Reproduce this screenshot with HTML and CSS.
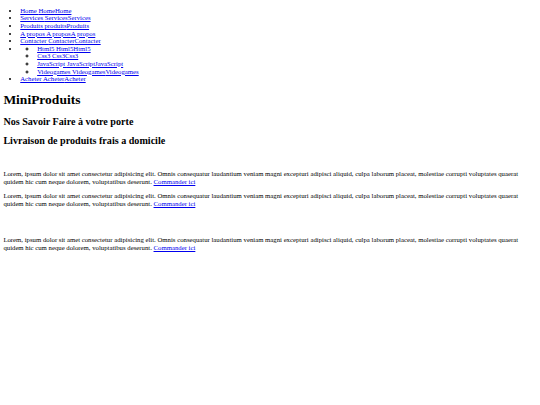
FILE: index.html
```html
<!DOCTYPE html>
<html lang="fr">
<head>
<meta charset="utf-8">
<title>MiniProduits</title>
<link rel="stylesheet" href="styles.css">
</head>
<body class="page">
<header class="header">
  <nav class="nav">
    <ul class="menu">
      <li class="menu-item"><a class="menu-link" href="#">Home <span>Home</span><span>Home</span></a></li>
      <li class="menu-item"><a class="menu-link" href="#">Services <span>Services</span><span>Services</span></a></li>
      <li class="menu-item"><a class="menu-link" href="#">Produits <span>produits</span><span>Produits</span></a></li>
      <li class="menu-item"><a class="menu-link" href="#">A propos <span>A propos</span><span>A propos</span></a></li>
      <li class="menu-item"><a class="menu-link" href="#">Contacter <span>Contacter</span><span>Contacter</span></a></li>
      <li class="menu-item">
        <ul class="submenu">
          <li class="menu-item"><a class="menu-link" href="#">Html5 <span>Html5</span><span>Html5</span></a></li>
          <li class="menu-item"><a class="menu-link" href="#">Css3 <span>Css3</span><span>Css3</span></a></li>
          <li class="menu-item"><a class="menu-link" href="#">JavaScript <span>JavaScript</span><span>JavaScript</span></a></li>
          <li class="menu-item"><a class="menu-link" href="#">Videogames <span>Videogames</span><span>Videogames</span></a></li>
        </ul>
      </li>
      <li class="menu-item"><a class="menu-link" href="#">Acheter <span>Acheter</span><span>Acheter</span></a></li>
    </ul>
  </nav>
  <h1 class="title">MiniProduits</h1>
  <h2 class="subtitle">Nos Savoir Faire à votre porte</h2>
  <h3 class="tagline">Livraison de produits frais a domicile</h3>
</header>
<main class="content">
  <div class="spacer spacer-top"></div>
  <p class="text">Lorem, ipsum dolor sit amet consectetur adipisicing elit. Omnis consequatur laudantium veniam magni excepturi adipisci aliquid, culpa laborum placeat, molestiae corrupti voluptates quaerat quidem hic cum neque dolorem, voluptatibus deserunt. <a class="cta" href="#">Commander ici</a></p>
  <p class="text">Lorem, ipsum dolor sit amet consectetur adipisicing elit. Omnis consequatur laudantium veniam magni excepturi adipisci aliquid, culpa laborum placeat, molestiae corrupti voluptates quaerat quidem hic cum neque dolorem, voluptatibus deserunt. <a class="cta" href="#">Commander ici</a></p>
  <div class="spacer spacer-mid"></div>
  <p class="text">Lorem, ipsum dolor sit amet consectetur adipisicing elit. Omnis consequatur laudantium veniam magni excepturi adipisci aliquid, culpa laborum placeat, molestiae corrupti voluptates quaerat quidem hic cum neque dolorem, voluptatibus deserunt. <a class="cta" href="#">Commander ici</a></p>
</main>
</body>
</html>
```
FILE: styles.css
```css
html {
  font-size: 6.75px;
}

.page {
  margin: 0;
  padding: 0 3.375px 3.375px;
  font-family: "Liberation Serif", "Times New Roman", serif;
  font-size: 6.75px;
  line-height: 7.6px;
  color: #000;
  background: #fff;
}

.menu {
  margin: 6.75px 0;
  padding-left: 16.875px;
  list-style: disc;
}

.submenu {
  margin: 0;
  padding-left: 16.875px;
  list-style: circle;
}

.menu-link,
.cta {
  color: #0000ee;
  text-decoration: underline;
}

.title {
  font-size: 13.5px;
  line-height: 15.5px;
  margin: 9.05px 0;
}

.subtitle {
  font-size: 10.125px;
  line-height: 11.6px;
  margin: 8.4px 0 7.4px;
}

.tagline {
  font-size: 10.125px;
  line-height: 11.6px;
  margin: 7.4px 0 7.9px;
}

.spacer-top {
  height: 9.3px;
}

.spacer-mid {
  height: 16.5px;
}

.text {
  margin: 5.75px 0;
  line-height: 8px;
}
```
